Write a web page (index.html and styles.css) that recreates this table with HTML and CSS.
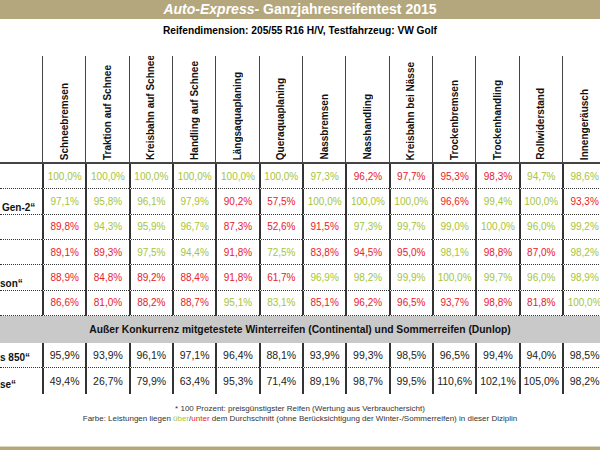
FILE: index.html
```html
<!DOCTYPE html>
<html lang="de">
<head>
<meta charset="utf-8">
<title>Auto-Express Ganzjahresreifentest 2015</title>
<link rel="stylesheet" href="styles.css">
</head>
<body>
<div class="page">
  <header class="titlebar"><em>Auto-Express-</em> Ganzjahresreifentest 2015</header>
  <div class="subtitle">Reifendimension: 205/55 R16 H/V, Testfahrzeug: VW Golf</div>

  <div class="sheet">
    <div class="hcell hlabel"></div>
    <div class="hcell"><span>Schneebremsen</span></div>
    <div class="hcell"><span>Traktion auf Schnee</span></div>
    <div class="hcell"><span>Kreisbahn auf Schnee</span></div>
    <div class="hcell"><span>Handling auf Schnee</span></div>
    <div class="hcell"><span>Längsaquaplaning</span></div>
    <div class="hcell"><span>Queraquaplaning</span></div>
    <div class="hcell"><span>Nassbremsen</span></div>
    <div class="hcell"><span>Nasshandling</span></div>
    <div class="hcell"><span>Kreisbahn bei Nässe</span></div>
    <div class="hcell"><span>Trockenbremsen</span></div>
    <div class="hcell"><span>Trockenhandling</span></div>
    <div class="hcell"><span>Rollwiderstand</span></div>
    <div class="hcell"><span>Innengeräusch</span></div>

    <div class="label"></div>
    <div class="cell g">100,0%</div><div class="cell g">100,0%</div><div class="cell g">100,0%</div><div class="cell g">100,0%</div><div class="cell g">100,0%</div><div class="cell g">100,0%</div><div class="cell g">97,3%</div><div class="cell r">96,2%</div><div class="cell r">97,7%</div><div class="cell r">95,3%</div><div class="cell r">98,3%</div><div class="cell g">94,7%</div><div class="cell g">98,6%</div>

    <div class="label"><span class="inset">Gen-2“</span></div>
    <div class="cell g">97,1%</div><div class="cell g">95,8%</div><div class="cell g">96,1%</div><div class="cell g">97,9%</div><div class="cell r">90,2%</div><div class="cell r">57,5%</div><div class="cell g">100,0%</div><div class="cell g">100,0%</div><div class="cell g">100,0%</div><div class="cell r">96,6%</div><div class="cell g">99,4%</div><div class="cell g">100,0%</div><div class="cell r">93,3%</div>

    <div class="label"></div>
    <div class="cell r">89,8%</div><div class="cell g">94,3%</div><div class="cell g">95,9%</div><div class="cell g">96,7%</div><div class="cell r">87,3%</div><div class="cell r">52,6%</div><div class="cell r">91,5%</div><div class="cell g">97,3%</div><div class="cell g">99,7%</div><div class="cell g">99,0%</div><div class="cell g">100,0%</div><div class="cell g">96,0%</div><div class="cell g">99,2%</div>

    <div class="label"></div>
    <div class="cell r">89,1%</div><div class="cell r">89,3%</div><div class="cell g">97,5%</div><div class="cell g">94,4%</div><div class="cell r">91,8%</div><div class="cell g">72,5%</div><div class="cell r">83,8%</div><div class="cell r">94,5%</div><div class="cell r">95,0%</div><div class="cell g">98,1%</div><div class="cell r">98,8%</div><div class="cell r">87,0%</div><div class="cell g">98,2%</div>

    <div class="label"><span>son“</span></div>
    <div class="cell r">88,9%</div><div class="cell r">84,8%</div><div class="cell r">89,2%</div><div class="cell r">88,4%</div><div class="cell r">91,8%</div><div class="cell r">61,7%</div><div class="cell g">96,9%</div><div class="cell g">98,2%</div><div class="cell g">99,9%</div><div class="cell g">100,0%</div><div class="cell g">99,7%</div><div class="cell g">96,0%</div><div class="cell g">98,9%</div>

    <div class="label"></div>
    <div class="cell r">86,6%</div><div class="cell r">81,0%</div><div class="cell r">88,2%</div><div class="cell r">88,7%</div><div class="cell g">95,1%</div><div class="cell g">83,1%</div><div class="cell r">85,1%</div><div class="cell r">96,2%</div><div class="cell r">96,5%</div><div class="cell r">93,7%</div><div class="cell r">98,8%</div><div class="cell r">81,8%</div><div class="cell g">100,0%</div>

    <div class="band">Außer Konkurrenz mitgetestete Winterreifen (Continental) und Sommerreifen (Dunlop)</div>

    <div class="label extra"><span>s 850“</span></div>
    <div class="cell x">95,9%</div><div class="cell x">93,9%</div><div class="cell x">96,1%</div><div class="cell x">97,1%</div><div class="cell x">96,4%</div><div class="cell x">88,1%</div><div class="cell x">93,9%</div><div class="cell x">99,3%</div><div class="cell x">98,5%</div><div class="cell x">96,5%</div><div class="cell x">99,4%</div><div class="cell x">94,0%</div><div class="cell x">98,5%</div>

    <div class="label extra last"><span>se“</span></div>
    <div class="cell x last">49,4%</div><div class="cell x last">26,7%</div><div class="cell x last">79,9%</div><div class="cell x last">63,4%</div><div class="cell x last">95,3%</div><div class="cell x last">71,4%</div><div class="cell x last">89,1%</div><div class="cell x last">98,7%</div><div class="cell x last">99,5%</div><div class="cell x last">110,6%</div><div class="cell x last">102,1%</div><div class="cell x last">105,0%</div><div class="cell x last">98,2%</div>
  </div>

  <div class="notes">
    <p>* 100 Prozent: preisgünstigster Reifen (Wertung aus Verbrauchersicht)</p>
    <p>Farbe: Leistungen liegen <span class="over">über</span>/<span class="under">unter</span> dem Durchschnitt (ohne Berücksichtigung der Winter-/Sommerreifen) in dieser Diziplin</p>
  </div>
  <div class="bottombar"></div>
</div>
</body>
</html>
```
FILE: styles.css
```css
html, body {
  margin: 0;
  padding: 0;
  width: 600px;
  height: 450px;
  overflow: hidden;
  background: #fff;
}
.page {
  width: 600px;
  height: 450px;
  display: flex;
  flex-direction: column;
  font-family: "Liberation Sans", Arial, sans-serif;
  color: #111;
}
.titlebar {
  height: 19px;
  line-height: 19px;
  background: #b4a77d;
  color: #fff;
  font-weight: bold;
  font-size: 14px;
  text-align: center;
}
.titlebar em {
  font-style: italic;
}
.subtitle {
  height: 24px;
  line-height: 24px;
  font-size: 10.2px;
  font-weight: bold;
  text-align: center;
  color: #000;
}
.sheet {
  margin-top: 13px;
  width: 606px;
  display: grid;
  grid-template-columns: 42px repeat(13, 43.33px);
  grid-template-rows: 108px repeat(6, 25.33px) 27px 25.5px 25.5px;
}
.hcell {
  border-left: 1.5px solid #444;
  border-bottom: 2px solid #444;
  display: flex;
  flex-direction: column;
  justify-content: flex-end;
  align-items: center;
  overflow: hidden;
  padding-bottom: 2px;
}
.hcell.hlabel {
  border-left: none;
}
.hcell span {
  writing-mode: vertical-rl;
  transform: rotate(180deg);
  font-size: 10px;
  font-weight: bold;
  white-space: nowrap;
  color: #111;
}
.label {
  border-bottom: 1px dotted #333;
  display: flex;
  justify-content: flex-start;
  align-items: flex-end;
  font-size: 10px;
  font-weight: bold;
  color: #111;
  white-space: nowrap;
  line-height: 12px;
}
.label .inset {
  padding-left: 2px;
}
.cell {
  border-left: 2px solid #333;
  border-bottom: 1px dotted #333;
  display: flex;
  align-items: center;
  justify-content: center;
  font-size: 10px;
  white-space: nowrap;
  overflow: hidden;
}
.cell.g { color: #a6c539; }
.cell.r { color: #e8212b; }
.cell.x {
  color: #222;
  font-size: 10.5px;
}
.label.last, .cell.last {
  border-bottom: none;
}
.label.extra {
  padding-bottom: 3px;
}
.band {
  grid-column: 1 / 15;
  width: 600px;
  background: #c9c9c9;
  display: flex;
  align-items: center;
  justify-content: center;
  font-size: 10.3px;
  font-weight: bold;
  color: #111;
}
.notes {
  margin-top: 10px;
  text-align: center;
  font-size: 8px;
  color: #333;
}
.notes p {
  margin: 0;
  line-height: 10px;
}
.notes .over { color: #a6c539; }
.notes .under { color: #e8212b; }
.bottombar {
  margin-top: auto;
  height: 3px;
  background: #b4a77d;
  border-top: 1px solid #ddd6c2;
}
```
